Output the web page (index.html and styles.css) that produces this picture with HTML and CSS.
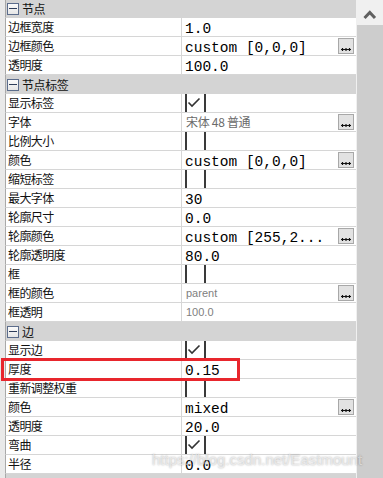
FILE: index.html
```html
<!DOCTYPE html>
<html>
<head>
<meta charset="utf-8">
<link rel="stylesheet" href="styles.css">
</head>
<body>
<div class="window">
  <div class="sheet">
    <div class="row head"><span class="tog"></span><span>节点</span></div>
    <div class="row"><div class="name">边框宽度</div><div class="val"><span class="v">1.0</span></div></div>
    <div class="row"><div class="name">边框颜色</div><div class="val"><span class="v">custom [0,0,0]</span><span class="btn"><svg width="10" height="4" viewBox="0 0 10 4"><path d="M0 2.5H10M1.5 1V4M5 1V4M8.5 1V4" stroke="#111" stroke-width="1.2"/></svg></span></div></div>
    <div class="row"><div class="name">透明度</div><div class="val"><span class="v">100.0</span></div></div>
    <div class="row head"><span class="tog"></span><span>节点标签</span></div>
    <div class="row"><div class="name">显示标签</div><div class="val"><span class="chk"><svg width="17" height="18" viewBox="0 0 17 18"><path d="M1.5 8.5L5 12L12.5 4.5" fill="none" stroke="#333" stroke-width="1.6"/></svg></span></div></div>
    <div class="row"><div class="name">字体</div><div class="val"><span class="g">宋体 48 普通</span><span class="btn"><svg width="10" height="4" viewBox="0 0 10 4"><path d="M0 2.5H10M1.5 1V4M5 1V4M8.5 1V4" stroke="#111" stroke-width="1.2"/></svg></span></div></div>
    <div class="row"><div class="name">比例大小</div><div class="val"><span class="chk"></span></div></div>
    <div class="row"><div class="name">颜色</div><div class="val"><span class="v">custom [0,0,0]</span><span class="btn"><svg width="10" height="4" viewBox="0 0 10 4"><path d="M0 2.5H10M1.5 1V4M5 1V4M8.5 1V4" stroke="#111" stroke-width="1.2"/></svg></span></div></div>
    <div class="row"><div class="name">缩短标签</div><div class="val"><span class="chk"></span></div></div>
    <div class="row"><div class="name">最大字体</div><div class="val"><span class="v">30</span></div></div>
    <div class="row"><div class="name">轮廓尺寸</div><div class="val"><span class="v">0.0</span></div></div>
    <div class="row"><div class="name">轮廓颜色</div><div class="val"><span class="v">custom [255,2...</span><span class="btn"><svg width="10" height="4" viewBox="0 0 10 4"><path d="M0 2.5H10M1.5 1V4M5 1V4M8.5 1V4" stroke="#111" stroke-width="1.2"/></svg></span></div></div>
    <div class="row"><div class="name">轮廓透明度</div><div class="val"><span class="v">80.0</span></div></div>
    <div class="row"><div class="name">框</div><div class="val"><span class="chk"></span></div></div>
    <div class="row"><div class="name">框的颜色</div><div class="val"><span class="s">parent</span><span class="btn"><svg width="10" height="4" viewBox="0 0 10 4"><path d="M0 2.5H10M1.5 1V4M5 1V4M8.5 1V4" stroke="#111" stroke-width="1.2"/></svg></span></div></div>
    <div class="row"><div class="name">框透明</div><div class="val"><span class="s">100.0</span></div></div>
    <div class="row head"><span class="tog"></span><span>边</span></div>
    <div class="row"><div class="name">显示边</div><div class="val"><span class="chk"><svg width="17" height="18" viewBox="0 0 17 18"><path d="M1.5 8.5L5 12L12.5 4.5" fill="none" stroke="#333" stroke-width="1.6"/></svg></span></div></div>
    <div class="row"><div class="name">厚度</div><div class="val"><span class="v">0.15</span></div></div>
    <div class="row"><div class="name">重新调整权重</div><div class="val"><span class="chk"></span></div></div>
    <div class="row"><div class="name">颜色</div><div class="val"><span class="v">mixed</span><span class="btn"><svg width="10" height="4" viewBox="0 0 10 4"><path d="M0 2.5H10M1.5 1V4M5 1V4M8.5 1V4" stroke="#111" stroke-width="1.2"/></svg></span></div></div>
    <div class="row"><div class="name">透明度</div><div class="val"><span class="v">20.0</span></div></div>
    <div class="row"><div class="name">弯曲</div><div class="val"><span class="chk"><svg width="17" height="18" viewBox="0 0 17 18"><path d="M1.5 8.5L5 12L12.5 4.5" fill="none" stroke="#333" stroke-width="1.6"/></svg></span></div></div>
    <div class="row"><div class="name">半径</div><div class="val"><span class="v">0.0</span></div></div>
    <div class="row head"><span class="tog"></span></div>
  </div>
  <div class="scrollbar">
    <div class="sb-btn"><svg width="26" height="25" viewBox="0 0 26 25"><polyline points="7.5,18 12.8,12.5 18,18" fill="none" stroke="#606060" stroke-width="3"/></svg></div>
    <div class="sb-thumb"></div>
  </div>
  <div class="highlight"></div>
  <div class="watermark">https://blog.csdn.net/Eastmount</div>
</div>
</body>
</html>
```

FILE: styles.css
```css
html, body {
  margin: 0;
  padding: 0;
  background: #fff;
}
.window {
  position: relative;
  width: 383px;
  height: 478px;
  overflow: hidden;
  display: flex;
  font-family: "Noto Sans CJK SC", "Liberation Sans", sans-serif;
}
.sheet {
  width: 356px;
  flex: none;
  margin-top: -1px;
  padding-left: 5px;
  box-sizing: border-box;
  background: #e9e9e9;
  display: flex;
  flex-direction: column;
}
.row {
  flex: none;
  height: 19px;
  box-sizing: border-box;
  border-left: 1px solid #a9a9a9;
  border-bottom: 1px solid #d6d6d6;
  background: #fff;
  display: grid;
  grid-template-columns: 176px 174px;
}
.name {
  border-right: 1px solid #d6d6d6;
  padding-left: 2px;
  font-size: 12px;
  line-height: 18px;
  color: #111;
  letter-spacing: -0.6px;
  white-space: nowrap;
  overflow: hidden;
}
.val {
  display: flex;
  align-items: flex-start;
  height: 18px;
  overflow: hidden;
  padding-left: 3px;
}
.v {
  font-family: "Liberation Mono", monospace;
  font-size: 14.5px;
  line-height: 18px;
  padding-top: 2px;
  color: #000;
  white-space: pre;
}
.g {
  font-size: 12px;
  line-height: 18px;
  color: #6a6a6a;
  padding-left: 1px;
  letter-spacing: -0.3px;
}
.s {
  font-family: "Liberation Sans", sans-serif;
  font-size: 11px;
  line-height: 18px;
  color: #808080;
  padding-left: 1px;
}
.btn {
  margin-left: auto;
  margin-right: 2px;
  margin-top: 1px;
  width: 16px;
  height: 16px;
  box-sizing: border-box;
  border: 1px solid #a8a8a8;
  background: #e2e2e2;
  display: flex;
  justify-content: center;
  align-items: flex-end;
  padding-bottom: 2px;
}
.btn svg {
  display: block;
}
.chk {
  width: 21px;
  height: 18px;
  box-sizing: border-box;
  border-left: 2px solid #3a3a3a;
  border-right: 2px solid #3a3a3a;
}
.chk svg {
  display: block;
}
.head {
  display: flex;
  align-items: center;
  background: #d4d4d4;
  border-bottom-color: #d4d4d4;
  font-size: 12px;
  color: #111;
  letter-spacing: -0.4px;
}
.tog {
  width: 12px;
  height: 12px;
  box-sizing: border-box;
  margin-left: 1px;
  margin-right: 3px;
  margin-top: 1px;
  border: 1px solid #5c6d8c;
  background: linear-gradient(#fbfbfb, #e6e6e6);
  display: flex;
  align-items: center;
  justify-content: center;
}
.tog::after {
  content: "";
  width: 8px;
  height: 1px;
  background: #2e3d5a;
}
.scrollbar {
  flex: 1;
  background: #f0f0f0;
  padding-left: 1px;
  display: flex;
  flex-direction: column;
}
.sb-btn {
  height: 25px;
  flex: none;
  background: #f0f0f0;
}
.sb-btn svg {
  display: block;
}
.sb-thumb {
  flex: 1;
  background: #cdcdcd;
}
.highlight {
  position: absolute;
  left: 1px;
  top: 358px;
  width: 239px;
  height: 23px;
  box-sizing: border-box;
  border: 3px solid #e8262d;
}
.watermark {
  position: absolute;
  left: 152px;
  top: 451px;
  font-family: "Liberation Sans", sans-serif;
  font-size: 15px;
  color: rgba(255, 255, 255, 0.55);
  text-shadow: 0 0 2px rgba(0, 0, 0, 0.35);
  white-space: nowrap;
}
```
